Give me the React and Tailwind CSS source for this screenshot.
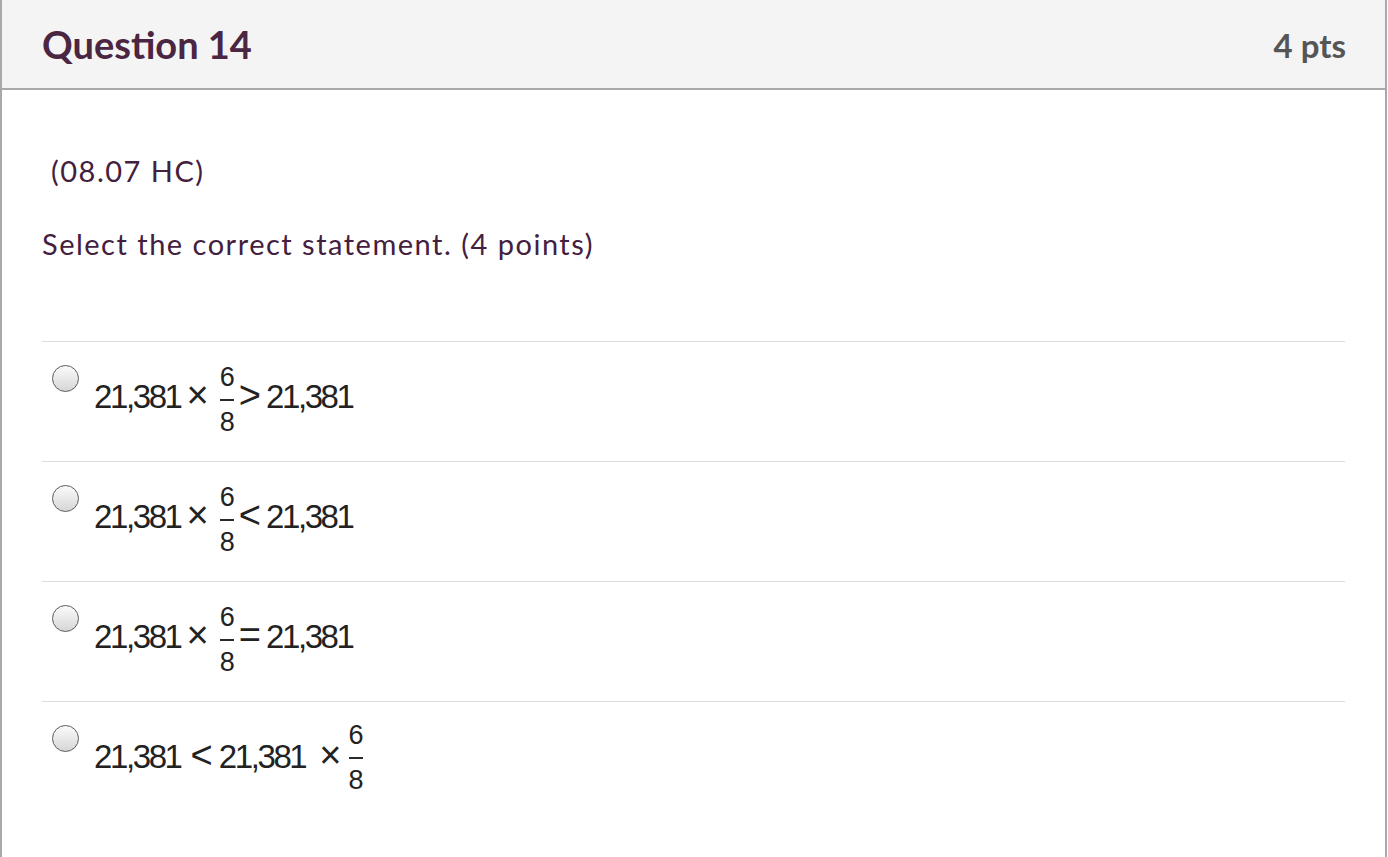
import React from 'react';

const mathFont = { fontFamily: '"Liberation Sans", Arial, sans-serif' };

const Fraction = ({ top, bottom }) => (
    <div className="flex flex-col items-center text-[27px] leading-none text-[#222]">
        <div>{top}</div>
        <div className="mt-[8px] h-[2px] w-[14px] bg-[#2a2a2a]"></div>
        <div className="mt-[8px]">{bottom}</div>
    </div>
);

const Num = ({ children, className = '' }) => (
    <span className={`mt-[16px] text-[33px] leading-none tracking-[-2.4px] text-[#222] ${className}`}>{children}</span>
);

const Sym = ({ children, className = '' }) => (
    <span className={`mt-[12px] text-[38px] leading-none text-[#222] ${className}`}>{children}</span>
);

const answers = [
    { key: 'gt', rel: '>' },
    { key: 'lt', rel: '<' },
    { key: 'eq', rel: '=' },
];

const Radio = () => (
    <span className="mt-[1px] block h-[27px] w-[27px] shrink-0 rounded-full border-[1.5px] border-[#5c5c5c] bg-linear-to-b from-[#fbfbfb] to-[#d6d6d6]" />
);

const Row = ({ children }) => (
    <div className="flex h-[120px] items-start border-t border-[#dcdcdc] pl-[10px] pt-[22px]">
        <Radio />
        <div className="ml-[15px] flex items-start" style={mathFont}>
            {children}
        </div>
    </div>
);

export default function App() {
    return (
        <div className="min-h-[857px] w-[1387px] border-x-2 border-[#a9a9a9] bg-white" style={{ fontFamily: 'Lato, "Open Sans", sans-serif' }}>
            <div className="flex h-[90px] items-center justify-between border-b-2 border-[#a9a9a9] bg-[#f4f4f4] pl-[40px] pr-[39px]">
                <h2 className="text-[38px] font-bold leading-none text-[#4a2642]">Question 14</h2>
                <span className="pt-[3px] text-[33px] font-bold leading-none text-[#555]">4 pts</span>
            </div>
            <div className="px-[40px] pt-[61px]">
                <p className="pl-[9px] text-[29px] leading-[40px] tracking-[1.5px] text-[#43203d]">(08.07 HC)</p>
                <p className="mt-[33px] text-[29px] leading-[40px] tracking-[1.5px] text-[#43203d]">Select the correct statement. (4 points)</p>
                <div className="mt-[77px]">
                    {answers.map(a => (
                        <Row key={a.key}>
                            <Num>21,381</Num>
                            <Sym className="ml-[6px]">×</Sym>
                            <div className="ml-[11px]"><Fraction top="6" bottom="8" /></div>
                            <Sym className="ml-[4px]">{a.rel}</Sym>
                            <Num className="ml-[5px]">21,381</Num>
                        </Row>
                    ))}
                    <Row>
                        <Num>21,381</Num>
                        <Sym className="ml-[10px]">&lt;</Sym>
                        <Num className="ml-[6px]">21,381</Num>
                        <Sym className="ml-[14px]">×</Sym>
                        <div className="ml-[7px] -mt-[2px]"><Fraction top="6" bottom="8" /></div>
                    </Row>
                </div>
            </div>
        </div>
    );
}
